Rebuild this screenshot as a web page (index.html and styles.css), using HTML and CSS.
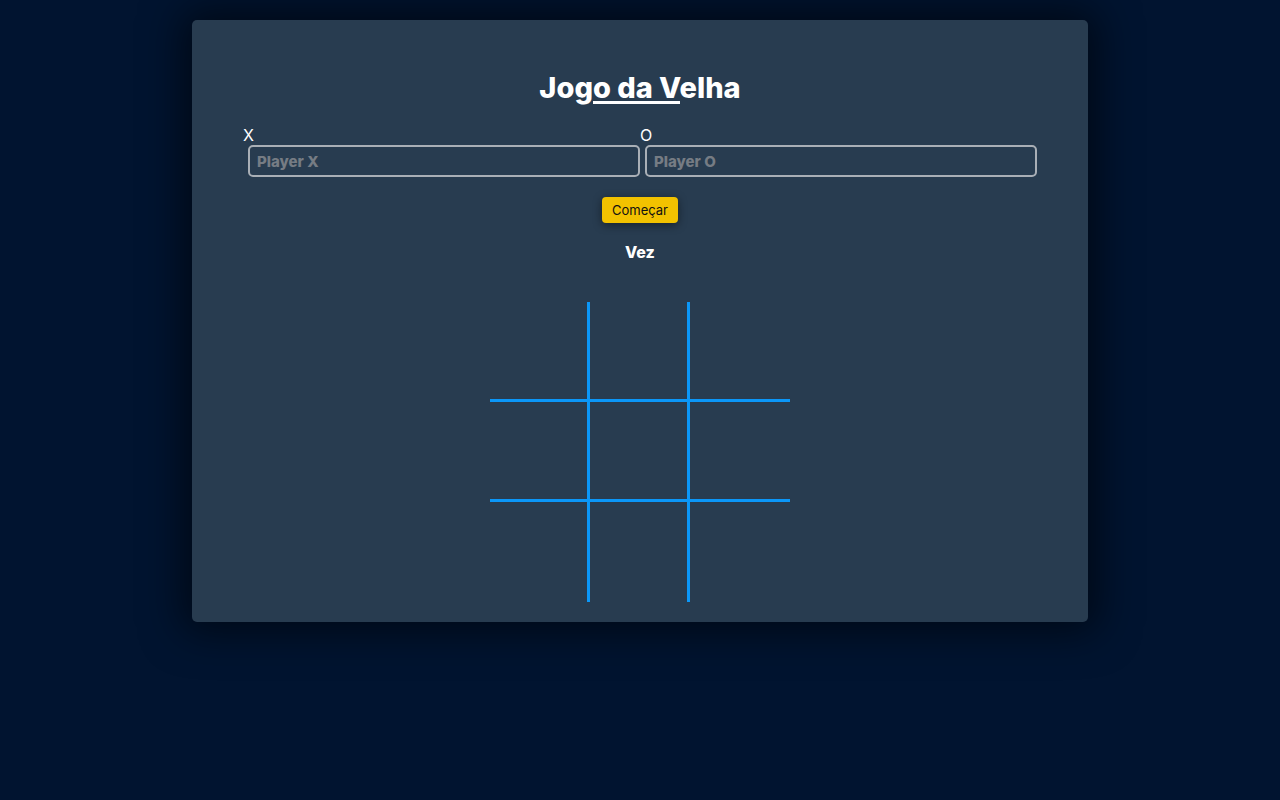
FILE: index.html
```html
<!DOCTYPE html>
<html lang="pt-BR">
<head>
<meta charset="utf-8">
<title>Jogo da Velha</title>
<link rel="stylesheet" href="styles.css">
</head>
<body>
<main class="card">
  <h1 class="title">Jogo da Velha</h1>
  <div class="players">
    <div class="player">
      <label class="player-label" for="px">X</label>
      <input class="player-input" id="px" type="text" placeholder="Player X">
    </div>
    <div class="player">
      <label class="player-label" for="po">O</label>
      <input class="player-input" id="po" type="text" placeholder="Player O">
    </div>
  </div>
  <button class="start" type="button">Começar</button>
  <p class="turn">Vez</p>
  <div class="board">
    <div class="cell"></div><div class="cell"></div><div class="cell"></div>
    <div class="cell"></div><div class="cell"></div><div class="cell"></div>
    <div class="cell"></div><div class="cell"></div><div class="cell"></div>
  </div>
</main>
</body>
</html>
```
FILE: styles.css
```css
* { box-sizing: border-box; }
html, body { margin: 0; }
body {
  background: #011430;
  font-family: Inter, "Noto Sans", sans-serif;
  color: #ffffff;
  min-height: 800px;
  padding-top: 20px;
}
.card {
  width: 896px;
  margin: 0 auto;
  background: #283c50;
  border-radius: 5px;
  padding: 51px 51px 20px;
  box-shadow: 0 0 40px 10px rgba(0, 0, 0, 0.55);
  display: flex;
  flex-direction: column;
  align-items: center;
}
.title {
  position: relative;
  margin: 0;
  font-size: 29px;
  font-weight: 800;
  line-height: 34px;
  align-self: stretch;
  text-align: center;
  letter-spacing: 0;
}
.title::after {
  content: "";
  position: absolute;
  left: calc(50% - 47px);
  top: 30px;
  width: 87px;
  height: 3px;
  background: #ffffff;
}
.players {
  align-self: stretch;
  display: flex;
  margin-top: 21px;
}
.player {
  flex: 1;
  display: flex;
  flex-direction: column;
  align-items: flex-start;
}
.player-label {
  font-size: 16px;
  line-height: 19px;
  font-weight: 400;
}
.player-input {
  margin-left: 5px;
  width: calc(100% - 5px);
  height: 32px;
  background: transparent;
  border: 2px solid #a9afb6;
  border-radius: 5px;
  padding: 0 7px;
  font-family: Inter, "Noto Sans", sans-serif;
  font-size: 15px;
  font-weight: 800;
  color: #ffffff;
  outline: none;
}
.player-input::placeholder {
  color: #767c84;
  opacity: 1;
}
.start {
  margin-top: 20px;
  height: 26px;
  padding: 0 10px;
  background: #f2c200;
  color: #111111;
  border: none;
  border-radius: 4px;
  font-family: Inter, "Noto Sans", sans-serif;
  font-size: 13px;
  box-shadow: 0 2px 10px rgba(0, 0, 0, 0.45);
}
.turn {
  margin: 20px 0 0;
  font-size: 16px;
  line-height: 19px;
  font-weight: 800;
}
.board {
  margin-top: 40px;
  display: grid;
  grid-template-columns: repeat(3, 100px);
  grid-template-rows: repeat(3, 100px);
}
.cell {
  border-color: #0b97f8;
  border-style: solid;
  border-width: 0;
}
.cell:nth-child(3n+1),
.cell:nth-child(3n+2) { border-right-width: 3px; }
.cell:nth-child(-n+6) { border-bottom-width: 3px; }
```
